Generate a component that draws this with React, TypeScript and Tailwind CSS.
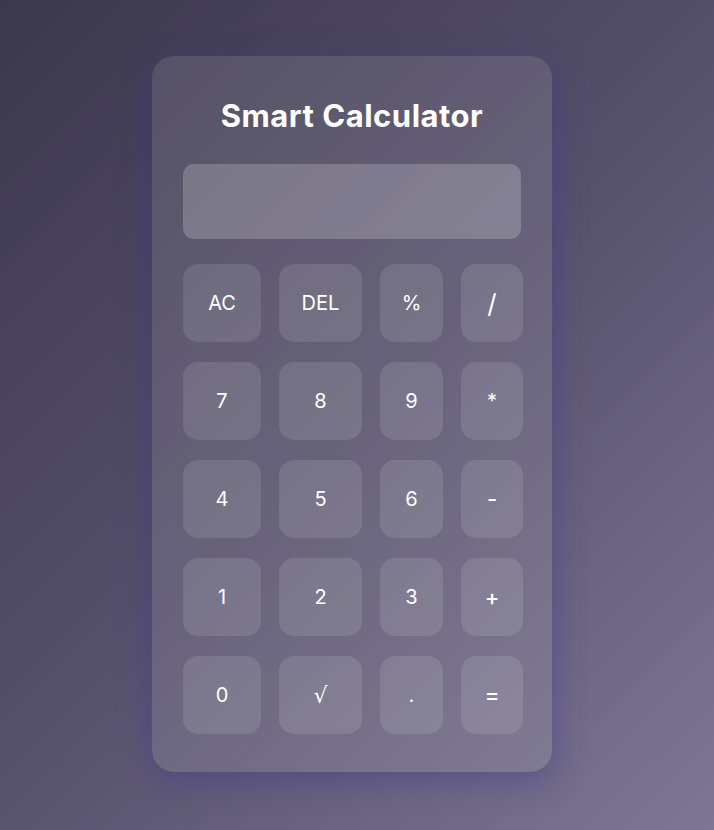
import React from "react";

const keys = ["AC", "DEL", "%", "/", "7", "8", "9", "*", "4", "5", "6", "-", "1", "2", "3", "+", "0", "√", ".", "="];

export default function App() {
  return (
    <div
      className="min-h-[830px] w-full bg-[linear-gradient(135deg,#3b374c_0%,#56516b_50%,#7d7793_100%)] pt-[56px] pl-[152px]"
      style={{ fontFamily: "Inter, 'Open Sans', sans-serif" }}
    >
      <div className="w-[400px] h-[716px] rounded-[22px] bg-white/10 shadow-[0_8px_32px_0_rgba(60,50,150,0.45)] px-[31px] pt-[40px] pb-[38px] flex flex-col">
        <h1 className="text-center text-white font-bold text-[31px] leading-[40px] tracking-[0.5px]">Smart Calculator</h1>
        <div className="mt-[28px] h-[75px] w-[338px] rounded-[11px] bg-white/20" />
        <div className="mt-[25px] grid grid-cols-[78px_83px_63px_62px] gap-x-[18px] gap-y-[20px]">
          {keys.map((k) => (
            <button
              key={k}
              className={
                "h-[78px] rounded-[15px] bg-white/[0.11] text-white flex items-center justify-center " +
                (k === "/"
                  ? "text-[26px]"
                  : k === "√"
                  ? "text-[22px]"
                  : k === "+" || k === "=" || k === "-"
                  ? "text-[22px] font-medium"
                  : "text-[20px]")
              }
              style={k === "√" ? { fontFamily: "'DejaVu Serif', serif" } : undefined}
            >
              {k}
            </button>
          ))}
        </div>
      </div>
    </div>
  );
}
